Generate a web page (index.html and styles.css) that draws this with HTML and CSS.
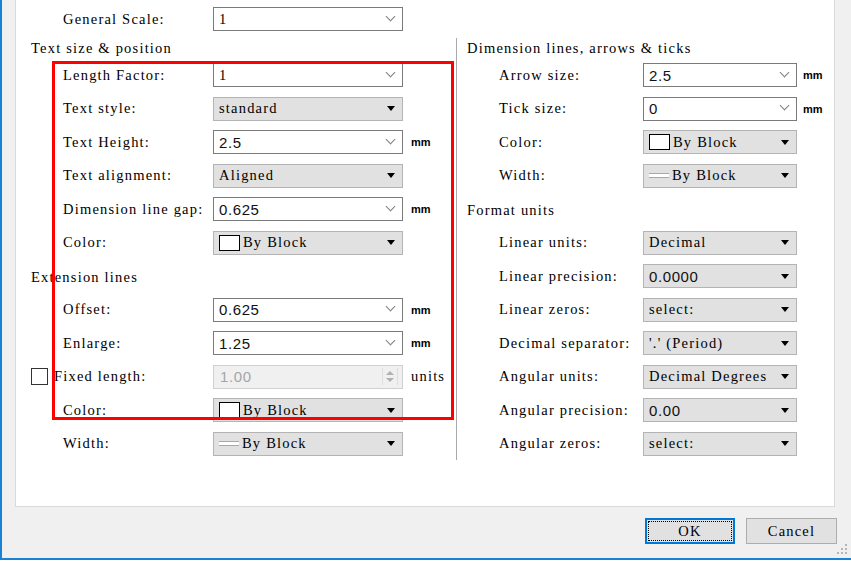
FILE: index.html
```html
<!DOCTYPE html>
<html lang="en">
<head>
  <meta charset="UTF-8">
  <title>Dimension style</title>
  <link rel="stylesheet" href="styles.css">
</head>
<body>
  <div class="window">
    <div class="panel">
      <div class="row top-row">
        <span class="label">General Scale:</span>
        <div class="combo edit"><span>1</span></div>
      </div>

      <div class="columns">
        <div class="col col-left">
          <div class="head">Text size &amp; position</div>
          <div class="row">
            <span class="label">Length Factor:</span>
            <div class="combo edit"><span>1</span></div>
          </div>
          <div class="row">
            <span class="label">Text style:</span>
            <div class="combo drop"><span>standard</span></div>
          </div>
          <div class="row">
            <span class="label">Text Height:</span>
            <div class="combo edit"><span class="num">2.5</span></div>
            <span class="unit">mm</span>
          </div>
          <div class="row">
            <span class="label">Text alignment:</span>
            <div class="combo drop"><span>Aligned</span></div>
          </div>
          <div class="row">
            <span class="label">Dimension line gap:</span>
            <div class="combo edit"><span class="num">0.625</span></div>
            <span class="unit">mm</span>
          </div>
          <div class="row">
            <span class="label">Color:</span>
            <div class="combo drop"><i class="swatch"></i><span>By Block</span></div>
          </div>
          <div class="head sub">Extension lines</div>
          <div class="row">
            <span class="label">Offset:</span>
            <div class="combo edit"><span class="num">0.625</span></div>
            <span class="unit">mm</span>
          </div>
          <div class="row">
            <span class="label">Enlarge:</span>
            <div class="combo edit"><span class="num">1.25</span></div>
            <span class="unit">mm</span>
          </div>
          <div class="row check-row">
            <span class="checkbox"></span>
            <span class="label">Fixed length:</span>
            <div class="spin">
              <span class="num">1.00</span>
              <div class="spin-btns"><i class="up"></i><i class="down"></i></div>
            </div>
            <span class="unit-text">units</span>
          </div>
          <div class="row">
            <span class="label">Color:</span>
            <div class="combo drop"><i class="swatch"></i><span>By Block</span></div>
          </div>
          <div class="row">
            <span class="label">Width:</span>
            <div class="combo drop"><i class="line"></i><span>By Block</span></div>
          </div>
        </div>

        <div class="col col-right">
          <div class="head">Dimension lines, arrows &amp; ticks</div>
          <div class="row">
            <span class="label">Arrow size:</span>
            <div class="combo edit"><span class="num">2.5</span></div>
            <span class="unit">mm</span>
          </div>
          <div class="row">
            <span class="label">Tick size:</span>
            <div class="combo edit"><span class="num">0</span></div>
            <span class="unit">mm</span>
          </div>
          <div class="row">
            <span class="label">Color:</span>
            <div class="combo drop"><i class="swatch"></i><span>By Block</span></div>
          </div>
          <div class="row">
            <span class="label">Width:</span>
            <div class="combo drop"><i class="line"></i><span>By Block</span></div>
          </div>
          <div class="head sub">Format units</div>
          <div class="row">
            <span class="label">Linear units:</span>
            <div class="combo drop"><span>Decimal</span></div>
          </div>
          <div class="row">
            <span class="label">Linear precision:</span>
            <div class="combo drop"><span class="num">0.0000</span></div>
          </div>
          <div class="row">
            <span class="label">Linear zeros:</span>
            <div class="combo drop"><span>select:</span></div>
          </div>
          <div class="row">
            <span class="label">Decimal separator:</span>
            <div class="combo drop"><span>'.' (Period)</span></div>
          </div>
          <div class="row">
            <span class="label">Angular units:</span>
            <div class="combo drop"><span>Decimal Degrees</span></div>
          </div>
          <div class="row">
            <span class="label">Angular precision:</span>
            <div class="combo drop"><span class="num">0.00</span></div>
          </div>
          <div class="row">
            <span class="label">Angular zeros:</span>
            <div class="combo drop"><span>select:</span></div>
          </div>
        </div>
      </div>
    </div>

    <div class="buttons">
      <button class="btn default">OK</button>
      <button class="btn">Cancel</button>
    </div>

    <!-- annotation box drawn over the dialog -->
    <div class="highlight"></div>

    <svg class="grip" width="11" height="11" viewBox="0 0 11 11">
      <rect x="8" y="0" width="2" height="2" fill="#b5b5b5"/>
      <rect x="4" y="4" width="2" height="2" fill="#b5b5b5"/>
      <rect x="8" y="4" width="2" height="2" fill="#b5b5b5"/>
      <rect x="0" y="8" width="2" height="2" fill="#b5b5b5"/>
      <rect x="4" y="8" width="2" height="2" fill="#b5b5b5"/>
      <rect x="8" y="8" width="2" height="2" fill="#b5b5b5"/>
    </svg>
  </div>
</body>
</html>
```

FILE: styles.css
```css
body {
  margin: 0;
  background: #fff;
  font-family: "Liberation Serif", "Times New Roman", serif;
  font-size: 14.5px;
  letter-spacing: 1.2px;
  color: #000;
}

.window {
  position: relative;
  height: 558px;
  background: #f0f0f0;
  border-left: 2px solid #1a82d4;
  border-bottom: 2px solid #1a82d4;
}

.panel {
  margin-left: 13px;
  width: 818px;
  height: 506px;
  background: #fff;
  border: 1px solid #d9d9d9;
  border-top: none;
}

.row {
  display: flex;
  align-items: center;
  height: 33.5px;
  padding-left: 32px;
  white-space: nowrap;
}

.top-row {
  height: 38px;
  padding-left: 47px;
}

.columns {
  display: flex;
}

.col {
  box-sizing: border-box;
}

.col-left {
  width: 440px;
  padding-left: 15px;
}

.col-right {
  flex: 1;
  padding-left: 10px;
  border-left: 1px solid #a9a9a9;
  margin-bottom: 4px;
}

.head {
  height: 19.25px;
  display: flex;
  align-items: center;
  padding-top: 1px;
}

.head.sub {
  height: 33.5px;
  padding-top: 2px;
  box-sizing: border-box;
}

.label {
  width: 150px;
}

.col-right .label {
  width: 144px;
}

/* combo boxes */
.combo {
  box-sizing: border-box;
  display: flex;
  align-items: center;
  width: 190px;
  height: 24px;
  padding: 0 5px 0 5px;
}

.col-right .combo {
  width: 154px;
}

.combo.edit {
  background: #fff;
  border: 1px solid #7a7a7a;
}

.combo.edit::after {
  content: "";
  margin-left: auto;
  margin-right: 3px;
  width: 6px;
  height: 6px;
  border-right: 1px solid #7f7f7f;
  border-bottom: 1px solid #7f7f7f;
  transform: translateY(-3px) rotate(45deg);
}

.combo.drop {
  background: #e1e1e1;
  border: 1px solid #b4b4b4;
}

.combo.drop::after {
  content: "";
  margin-left: auto;
  margin-right: 2px;
  border-left: 4.5px solid transparent;
  border-right: 4.5px solid transparent;
  border-top: 5px solid #000;
}

.num {
  font-family: "Liberation Sans", Arial, sans-serif;
  font-size: 15px;
  letter-spacing: 0.6px;
  color: #111;
}

.swatch {
  width: 19px;
  height: 14px;
  border: 1px solid #000;
  background: #fff;
  margin-right: 3px;
}

.line {
  width: 20px;
  height: 3px;
  background: #fff;
  border-top: 1px solid #a8a8a8;
  border-bottom: 1px solid #a8a8a8;
  margin-right: 3px;
}

.unit {
  margin-left: 8px;
  font-family: "Liberation Sans", Arial, sans-serif;
  font-size: 11px;
  letter-spacing: 0;
  font-weight: bold;
}

.col-right .unit {
  margin-left: 6px;
}

.unit-text {
  margin-left: 8px;
}

/* fixed length row */
.check-row {
  padding-left: 0;
}

.check-row .label {
  width: 159px;
}

.checkbox {
  box-sizing: border-box;
  width: 17px;
  height: 17px;
  margin-right: 6px;
  background: #fff;
  border: 1px solid #333;
}

.spin {
  box-sizing: border-box;
  display: flex;
  align-items: center;
  width: 190px;
  height: 24px;
  padding-left: 6px;
  background: #f0f0f0;
  border: 1px solid #d0d0d0;
}

.spin .num {
  color: #a5a5a5;
}

.spin-btns {
  margin-left: auto;
  margin-right: 4px;
  display: flex;
  flex-direction: column;
  gap: 3px;
  padding: 3px 3px;
  border-left: 1px solid #dedede;
  border-right: 1px solid #dedede;
}

.spin-btns .up {
  border-left: 4px solid transparent;
  border-right: 4px solid transparent;
  border-bottom: 4px solid #b0b0b0;
}

.spin-btns .down {
  border-left: 4px solid transparent;
  border-right: 4px solid transparent;
  border-top: 4px solid #b0b0b0;
}

/* dialog buttons */
.buttons {
  display: flex;
  justify-content: flex-end;
  gap: 11px;
  margin-top: 11px;
  padding-right: 14px;
}

.btn {
  box-sizing: border-box;
  width: 91px;
  height: 26px;
  font-family: inherit;
  font-size: 14.5px;
  letter-spacing: 1.2px;
  color: #000;
  background: #e1e1e1;
  border: 1px solid #adadad;
  padding: 0;
}

.btn.default {
  width: 90px;
  border: 2px solid #0078d7;
  outline: 1px dotted #000;
  outline-offset: -4px;
}

.highlight {
  position: absolute;
  left: 50px;
  top: 61px;
  width: 402px;
  height: 359px;
  box-sizing: border-box;
  border: 3px solid #ff0000;
}

.grip {
  position: absolute;
  right: 3px;
  bottom: 3px;
}
```
